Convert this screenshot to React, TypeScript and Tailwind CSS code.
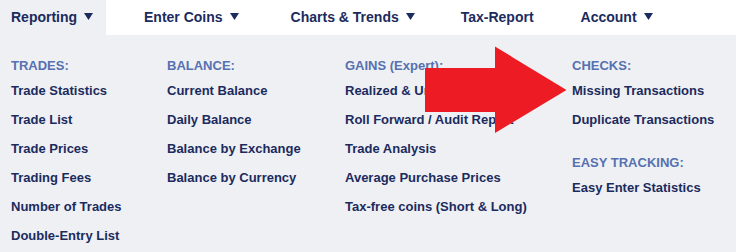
import React from "react";

const navy = "text-[#1b2b5e]";

function Caret() {
  return (
    <svg width="9" height="7" viewBox="0 0 9 7" className="ml-[7px] mt-[4px] shrink-0">
      <polygon points="0,0 9,0 4.5,7" fill="#1b2b5e" />
    </svg>
  );
}

type Col = { title: string; items: string[] }[];

const columns: Col[] = [
  [{ title: "TRADES:", items: ["Trade Statistics", "Trade List", "Trade Prices", "Trading Fees", "Number of Trades", "Double-Entry List"] }],
  [{ title: "BALANCE:", items: ["Current Balance", "Daily Balance", "Balance by Exchange", "Balance by Currency"] }],
  [
    {
      title: "GAINS (Expert):",
      items: ["Realized & Unrealized Gains", "Roll Forward / Audit Report", "Trade Analysis", "Average Purchase Prices", "Tax-free coins (Short & Long)"],
    },
  ],
  [
    { title: "CHECKS:", items: ["Missing Transactions", "Duplicate Transactions"] },
    { title: "EASY TRACKING:", items: ["Easy Enter Statistics"] },
  ],
];

export default function App() {
  return (
    <div className="relative w-[736px] h-[252px] overflow-hidden bg-[#eff0f3] font-['Liberation_Sans',Arial,sans-serif] font-bold">
      {/* Top nav */}
      <div className={`flex h-[35px] bg-white text-[14px] leading-[16px] ${navy}`}>
        <div className="flex items-start w-[106px] pl-[11px] pt-[9px] bg-[#eff0f3]">
          Reporting
          <Caret />
        </div>
        <div className="flex items-start ml-[38px] pt-[9px]">
          Enter Coins
          <Caret />
        </div>
        <div className="flex items-start ml-[52px] pt-[9px]">
          Charts &amp; Trends
          <Caret />
        </div>
        <div className="flex items-start ml-[46px] pt-[9px]">Tax-Report</div>
        <div className="flex items-start ml-[47px] pt-[9px]">
          Account
          <Caret />
        </div>
      </div>

      {/* Dropdown */}
      <div className="grid grid-cols-[156px_178px_227px_1fr] pl-[11px] pt-[23px]">
        {columns.map((col, i) => (
          <div key={i} className="flex flex-col">
            {col.map((sec, j) => (
              <div key={sec.title} className={j > 0 ? "mt-[21px]" : ""}>
                <div className="h-[18px] text-[13px] leading-[16px] text-[#5670b1]">{sec.title}</div>
                {sec.items.map((it) => (
                  <div key={it} className={`text-[13px] leading-[29px] whitespace-nowrap ${navy}`}>
                    {it}
                  </div>
                ))}
              </div>
            ))}
          </div>
        ))}
      </div>

      {/* Red arrow overlay */}
      <svg className="absolute left-0 top-0 pointer-events-none" width="736" height="252" viewBox="0 0 736 252">
        <polygon points="425,68 495,68 495,46.5 566.5,90 495,133 495,112 425,112" fill="#ed1c24" />
      </svg>
    </div>
  );
}
